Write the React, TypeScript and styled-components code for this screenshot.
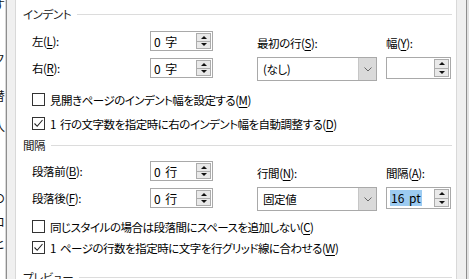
import React from 'react'
import styled, { createGlobalStyle } from 'styled-components'

const GlobalStyle = createGlobalStyle`
  html, body {
    margin: 0;
    padding: 0;
    background: #fff;
  }
`

const Screen = styled.div`
  width: 469px;
  height: 279px;
  display: flex;
  overflow: hidden;
  background: #fff;
  font-family: 'Noto Sans CJK JP', 'Noto Sans', sans-serif;
  font-size: 11.5px;
  color: #000;
  word-spacing: 2px;
  letter-spacing: -0.4px;
  font-feature-settings: 'palt';
`

const BackWindow = styled.div`
  width: 5px;
  flex: none;
  overflow: hidden;
  display: flex;
  flex-direction: column;
  border-right: 1px solid #d8d8d8;
  font-size: 12px;
  letter-spacing: 0;
  font-feature-settings: normal;
`

const BackGlyph = styled.span<{ $gap: number }>`
  display: block;
  height: 14px;
  line-height: 14px;
  margin-top: ${p => p.$gap}px;
  margin-left: -7px;
  white-space: nowrap;
  color: #111;
`

const FrameEdge = styled.div<{ $side: 'left' | 'right' }>`
  flex: none;
  width: ${p => (p.$side === 'left' ? 8 : 9)}px;
  background: #f0f0f0;
  border-${p => p.$side}: 1px solid #8e8e8e;
`

const OuterRight = styled.div`
  flex: none;
  width: 2px;
  background: #e2e2e2;
`

const Page = styled.main`
  flex: none;
  width: 429px;
  border-left: 1px solid #d9d9d9;
  border-right: 1px solid #d9d9d9;
  padding: 0 4px 0 7px;
  display: flex;
  flex-direction: column;
`

const Heading = styled.div<{ $top: number }>`
  display: flex;
  align-items: center;
  gap: 6px;
  height: 20px;
  margin-top: ${p => p.$top}px;
  color: #1a1a1a;
  flex: none;

  &::after {
    content: '';
    flex: 1;
    border-top: 1px solid #dcdcdc;
  }
`

const Body = styled.div`
  padding-left: 9px;
  display: flex;
  flex-direction: column;
`

const Fields = styled.div<{ $top: number }>`
  display: flex;
  align-items: flex-start;
  margin-top: ${p => p.$top}px;
  height: 51px;
`

const LeftFields = styled.div`
  width: 181px;
  padding-top: 1px;
  display: flex;
  flex-direction: column;
  gap: 7px;
`

const FieldRow = styled.div`
  display: flex;
  align-items: center;
  height: 20px;
`

const RowLabel = styled.span`
  width: 118px;
  line-height: 20px;
`

const StackField = styled.div<{ $left: number; $width: number }>`
  margin-left: ${p => p.$left}px;
  width: ${p => p.$width}px;
  display: flex;
  flex-direction: column;
`

const StackLabel = styled.span`
  height: 14px;
  line-height: 14px;
  margin: 6px 0 7px;
`

const SpinBox = styled.div<{ $width: number; $height: number }>`
  box-sizing: border-box;
  width: ${p => p.$width}px;
  height: ${p => p.$height}px;
  border: 1px solid #a9a9a9;
  background: #fff;
  display: flex;
`

const SpinValue = styled.span`
  flex: 1;
  padding-left: 3px;
  display: flex;
  align-items: center;
  white-space: pre;
  font-size: 12px;
  letter-spacing: 0;
`

const Selected = styled.span`
  background: #9ccbf1;
  padding: 0 1px;
  line-height: 16px;
`

const Spinner = styled.div`
  width: 15px;
  padding: 1px 1px 1px 0;
  display: flex;
  flex-direction: column;
`

const SpinButton = styled.div<{ $dir: 'up' | 'down' }>`
  flex: 1;
  background: #e9e9e9;
  border: 1px solid #acacac;
  border-top-width: ${p => (p.$dir === 'down' ? 0 : 1)}px;
  display: flex;
  align-items: center;
  justify-content: center;

  &::before {
    content: '';
    width: 0;
    height: 0;
    border-left: 3px solid transparent;
    border-right: 3px solid transparent;
    border-${p => (p.$dir === 'up' ? 'bottom' : 'top')}: 3px solid #111;
  }
`

const Dropdown = styled.div`
  box-sizing: border-box;
  width: 120px;
  height: 24px;
  border: 1px solid #a9a9a9;
  background: #fff;
  display: flex;
`

const DropValue = styled.span`
  flex: 1;
  padding-left: 5px;
  line-height: 22px;
`

const DropButton = styled.div`
  width: 17px;
  background: #dadada;
  border-left: 1px solid #c6c6c6;
  display: flex;
  align-items: center;
  justify-content: center;
`

const CheckList = styled.div<{ $top: number; $gap: number }>`
  display: flex;
  flex-direction: column;
  margin-top: ${p => p.$top}px;
  gap: ${p => p.$gap}px;
`

const CheckRow = styled.label`
  display: flex;
  align-items: center;
  gap: 5px;
  height: 21px;
  white-space: nowrap;
  letter-spacing: -0.5px;
`

const Box = styled.span`
  box-sizing: border-box;
  width: 13px;
  height: 13px;
  border: 1px solid #333;
  background: #fff;
  display: flex;
  align-items: center;
  justify-content: center;
  flex: none;
`

const U = styled.span`
  text-decoration: underline;
  text-underline-offset: 2px;
`

const Chevron = () => (
  <svg width="8" height="5" viewBox="0 0 8 5">
    <path d="M0.5 0.5 L4 4 L7.5 0.5" fill="none" stroke="#666" strokeWidth="1" />
  </svg>
)

const Spin = ({ width, height, children }: { width: number; height: number; children?: React.ReactNode }) => (
  <SpinBox $width={width} $height={height}>
    <SpinValue>{children}</SpinValue>
    <Spinner>
      <SpinButton $dir="up" />
      <SpinButton $dir="down" />
    </Spinner>
  </SpinBox>
)

const Check = ({ checked, children }: { checked?: boolean; children: React.ReactNode }) => (
  <CheckRow>
    <Box>
      {checked && (
        <svg width="11" height="11" viewBox="0 0 11 11">
          <path d="M1.5 5.5 L4.2 8.3 L9.5 2" fill="none" stroke="#222" strokeWidth="1.1" />
        </svg>
      )}
    </Box>
    <span>{children}</span>
  </CheckRow>
)

const backGlyphs = [
  { ch: 'す', gap: -2 },
  { ch: 'ク', gap: 40 },
  { ch: '替', gap: 23 },
  { ch: '入', gap: 16 },
  { ch: 'の', gap: 58 },
  { ch: 'コ', gap: 10 },
  { ch: 'ヒ', gap: 8 },
]

const App: React.FC = () => (
  <>
    <GlobalStyle />
    <Screen>
      <BackWindow>
        {backGlyphs.map((g, i) => (
          <BackGlyph key={i} $gap={g.gap}>
            {g.ch}
          </BackGlyph>
        ))}
      </BackWindow>
      <FrameEdge $side="left" />
      <Page>
        <Heading $top={4}>インデント</Heading>
        <Body>
          <Fields $top={6}>
            <LeftFields>
              <FieldRow>
                <RowLabel>
                  左(<U>L</U>):
                </RowLabel>
                <Spin width={63} height={20}>0 字</Spin>
              </FieldRow>
              <FieldRow>
                <RowLabel>
                  右(<U>R</U>):
                </RowLabel>
                <Spin width={63} height={20}>0 字</Spin>
              </FieldRow>
            </LeftFields>
            <StackField $left={44} $width={120}>
              <StackLabel>
                最初の行(<U>S</U>):
              </StackLabel>
              <Dropdown>
                <DropValue>(なし)</DropValue>
                <DropButton>
                  <Chevron />
                </DropButton>
              </Dropdown>
            </StackField>
            <StackField $left={9} $width={65}>
              <StackLabel>
                幅(<U>Y</U>):
              </StackLabel>
              <Spin width={65} height={22} />
            </StackField>
          </Fields>
          <CheckList $top={8} $gap={3}>
            <Check>
              見開きページのインデント幅を設定する(<U>M</U>)
            </Check>
            <Check checked>
              1 行の文字数を指定時に右のインデント幅を自動調整する(<U>D</U>)
            </Check>
          </CheckList>
        </Body>
        <Heading $top={1}>間隔</Heading>
        <Body>
          <Fields $top={5}>
            <LeftFields>
              <FieldRow>
                <RowLabel>
                  段落前(<U>B</U>):
                </RowLabel>
                <Spin width={63} height={20}>0 行</Spin>
              </FieldRow>
              <FieldRow>
                <RowLabel>
                  段落後(<U>F</U>):
                </RowLabel>
                <Spin width={63} height={20}>0 行</Spin>
              </FieldRow>
            </LeftFields>
            <StackField $left={44} $width={120}>
              <StackLabel>
                行間(<U>N</U>):
              </StackLabel>
              <Dropdown>
                <DropValue>固定値</DropValue>
                <DropButton>
                  <Chevron />
                </DropButton>
              </Dropdown>
            </StackField>
            <StackField $left={9} $width={65}>
              <StackLabel>
                間隔(<U>A</U>):
              </StackLabel>
              <Spin width={65} height={22}>
                <Selected>16 pt</Selected>
              </Spin>
            </StackField>
          </Fields>
          <CheckList $top={5} $gap={0}>
            <Check>
              同じスタイルの場合は段落間にスペースを追加しない(<U>C</U>)
            </Check>
            <Check checked>
              1 ページの行数を指定時に文字を行グリッド線に合わせる(<U>W</U>)
            </Check>
          </CheckList>
        </Body>
        <Heading $top={9}>プレビュー</Heading>
      </Page>
      <FrameEdge $side="right" />
      <OuterRight />
    </Screen>
  </>
)

export default App
